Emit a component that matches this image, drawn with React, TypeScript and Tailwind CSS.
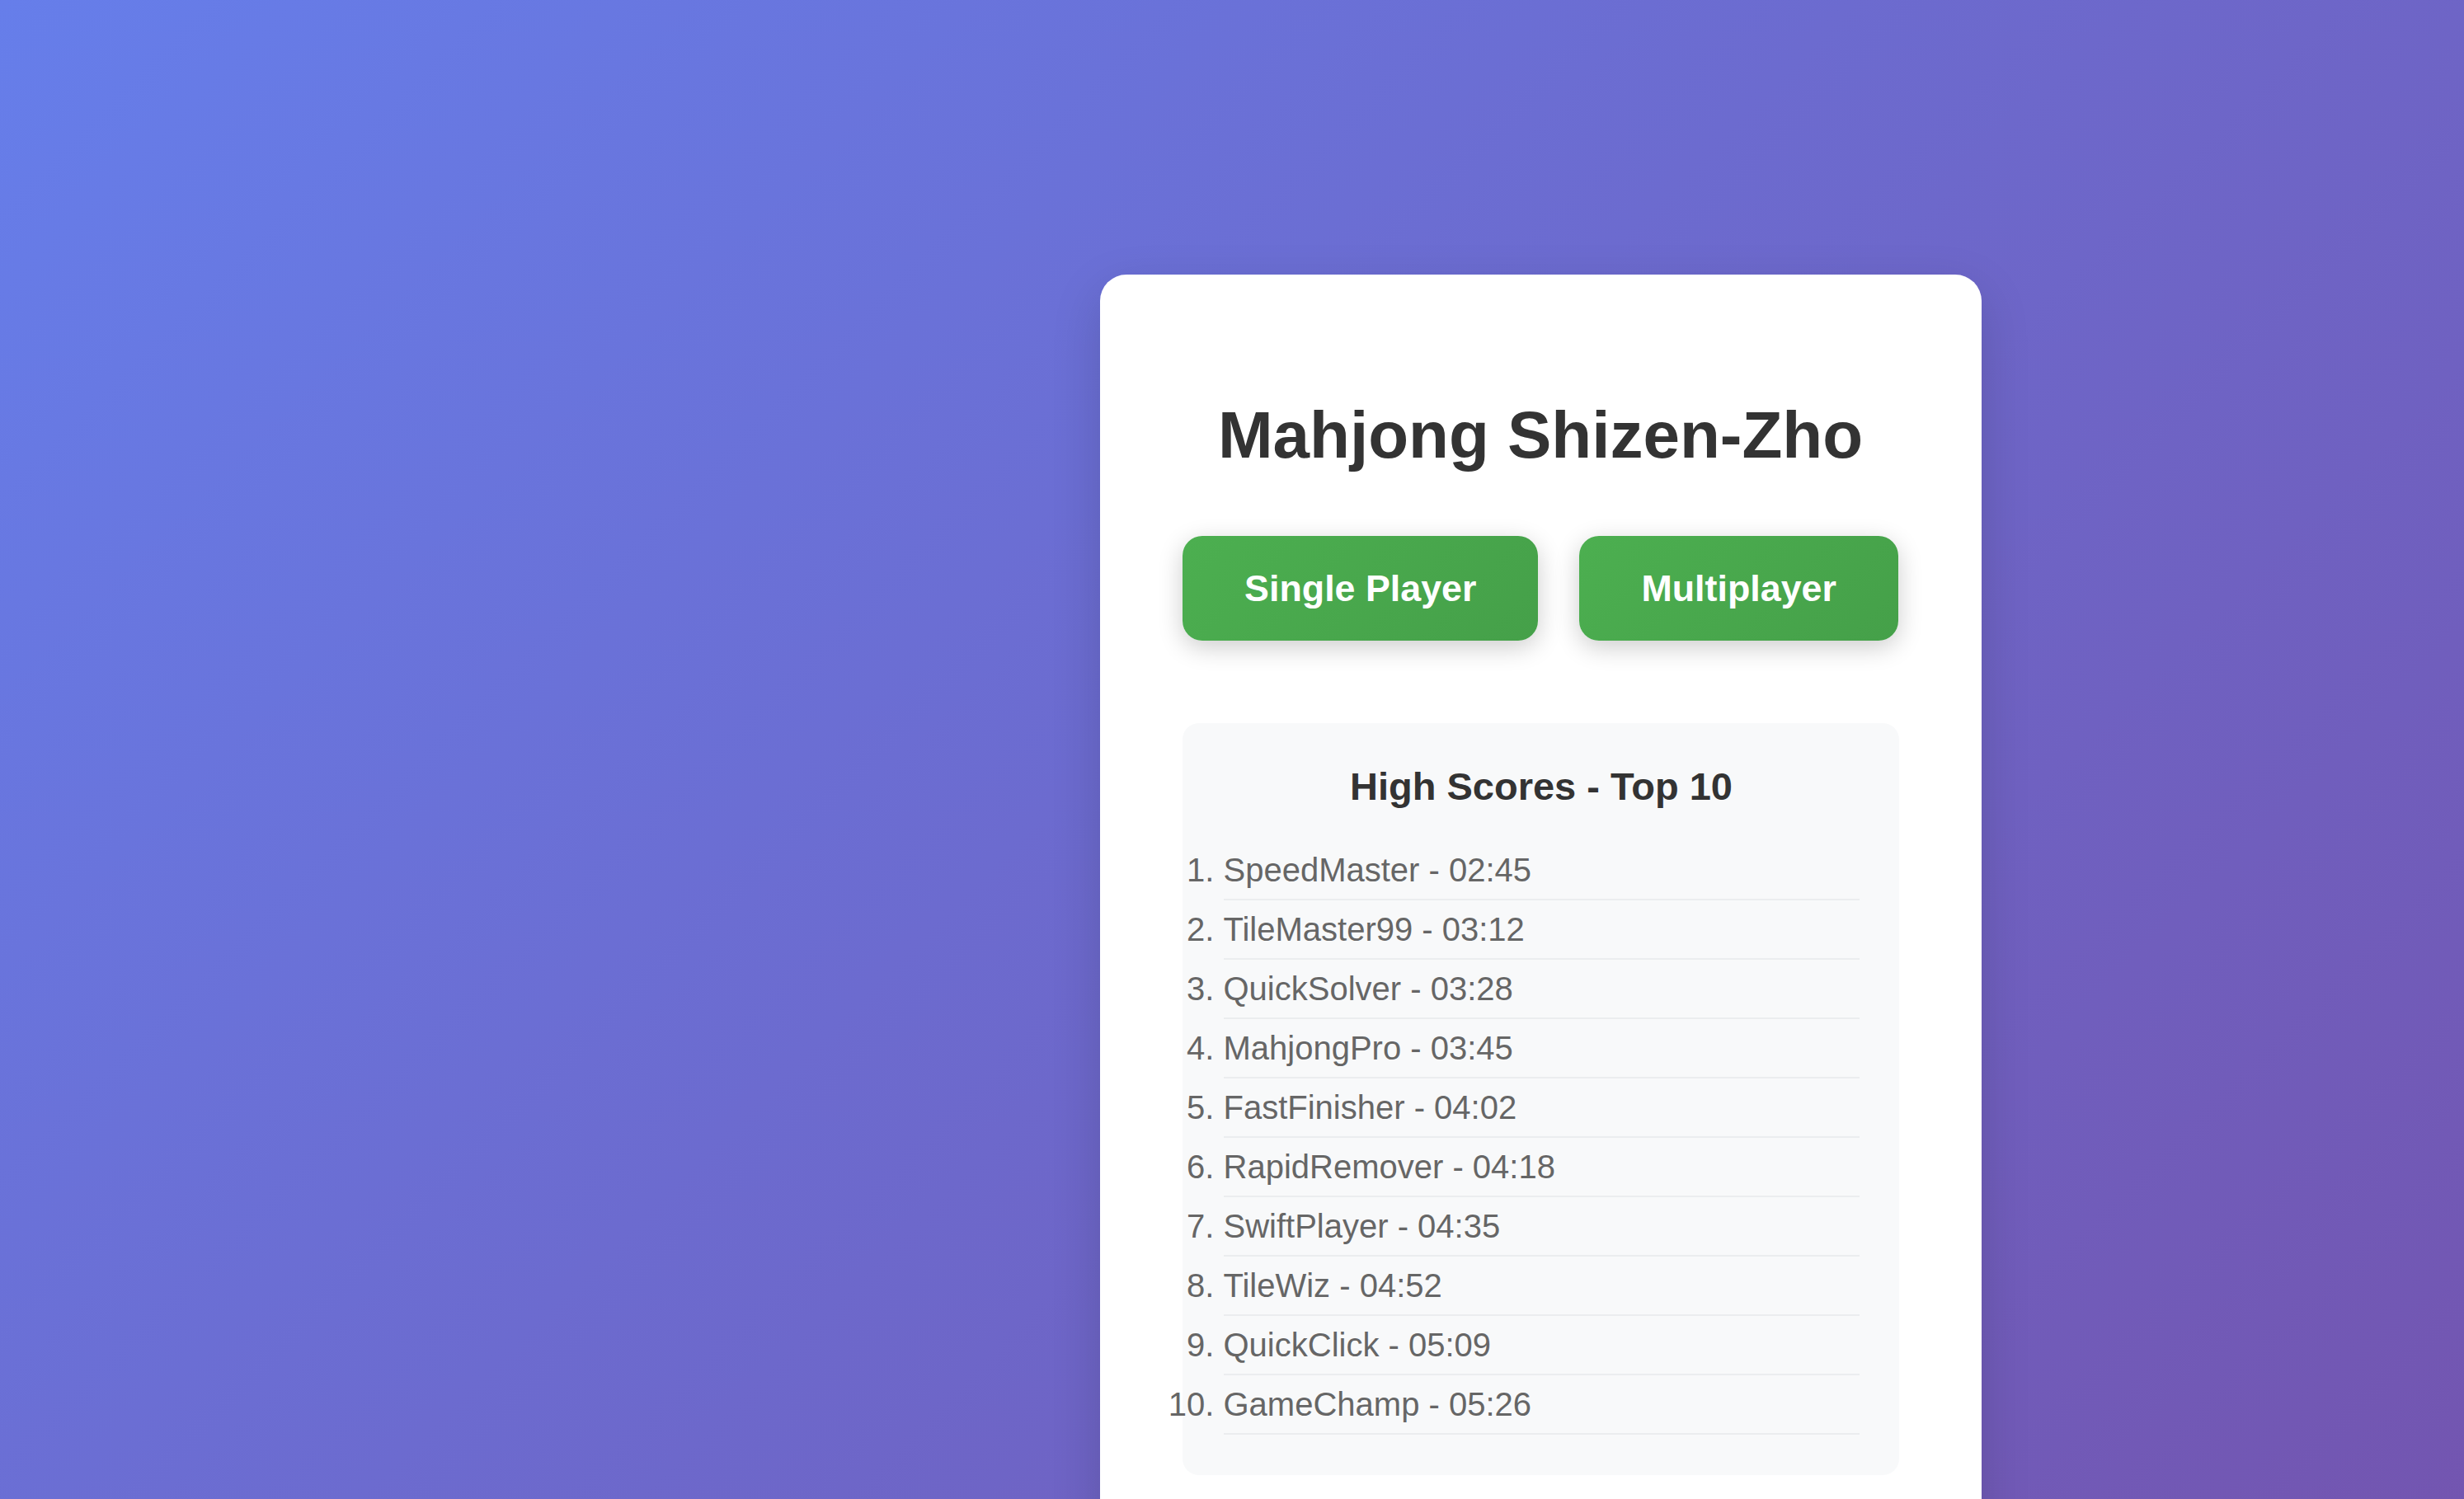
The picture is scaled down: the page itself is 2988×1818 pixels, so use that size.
import React from 'react';

const scores = [
  { name: 'SpeedMaster', time: '02:45' },
  { name: 'TileMaster99', time: '03:12' },
  { name: 'QuickSolver', time: '03:28' },
  { name: 'MahjongPro', time: '03:45' },
  { name: 'FastFinisher', time: '04:02' },
  { name: 'RapidRemover', time: '04:18' },
  { name: 'SwiftPlayer', time: '04:35' },
  { name: 'TileWiz', time: '04:52' },
  { name: 'QuickClick', time: '05:09' },
  { name: 'GameChamp', time: '05:26' },
];

export default function App() {
  return (
    <div
      className="min-h-screen h-[1818px] overflow-hidden bg-[linear-gradient(135deg,#667eea_0%,#764ba2_125%)] flex justify-center pl-[748px] pt-[333px]"
      style={{ fontFamily: '"Liberation Sans", Arial, Helvetica, sans-serif' }}
    >
      <div className="w-[1069px] shrink-0 self-start bg-white rounded-[32px] px-[100px] pt-[149px] pb-[100px] shadow-[0_20px_60px_rgba(0,0,0,0.15)]">
        {/* Title */}
        <h1 className="text-center text-[80px] leading-[92px] font-bold text-[#333]">
          Mahjong Shizen-Zho
        </h1>

        {/* Mode buttons */}
        <div className="flex justify-center gap-[50px] mt-[76px]">
          <button className="px-[75px] py-[38px] text-[44.8px] leading-[51px] font-bold text-white rounded-[24px] bg-[linear-gradient(135deg,#4caf50,#45a049)] shadow-[0_8px_30px_rgba(0,0,0,0.2)]">
            Single Player
          </button>
          <button className="px-[75px] py-[38px] text-[44.8px] leading-[51px] font-bold text-white rounded-[24px] bg-[linear-gradient(135deg,#4caf50,#45a049)] shadow-[0_8px_30px_rgba(0,0,0,0.2)]">
            Multiplayer
          </button>
        </div>

        {/* High scores */}
        <div className="mt-[100px] bg-[#f8f9fa] rounded-[20px] pl-[50px] pr-[48px] pt-[50px] pb-[49px]">
          <h3 className="text-center text-[47px] leading-[54px] font-bold text-[#333] mb-[39px]">
            High Scores - Top 10
          </h3>
          <ol className="list-decimal list-outside pl-0">
            {scores.map((s) => (
              <li
                key={s.name}
                className="text-[40px] leading-[46px] py-[12px] text-[#666] border-b-2 border-[#ebedef]"
              >
                {s.name} - {s.time}
              </li>
            ))}
          </ol>
        </div>
      </div>
    </div>
  );
}
